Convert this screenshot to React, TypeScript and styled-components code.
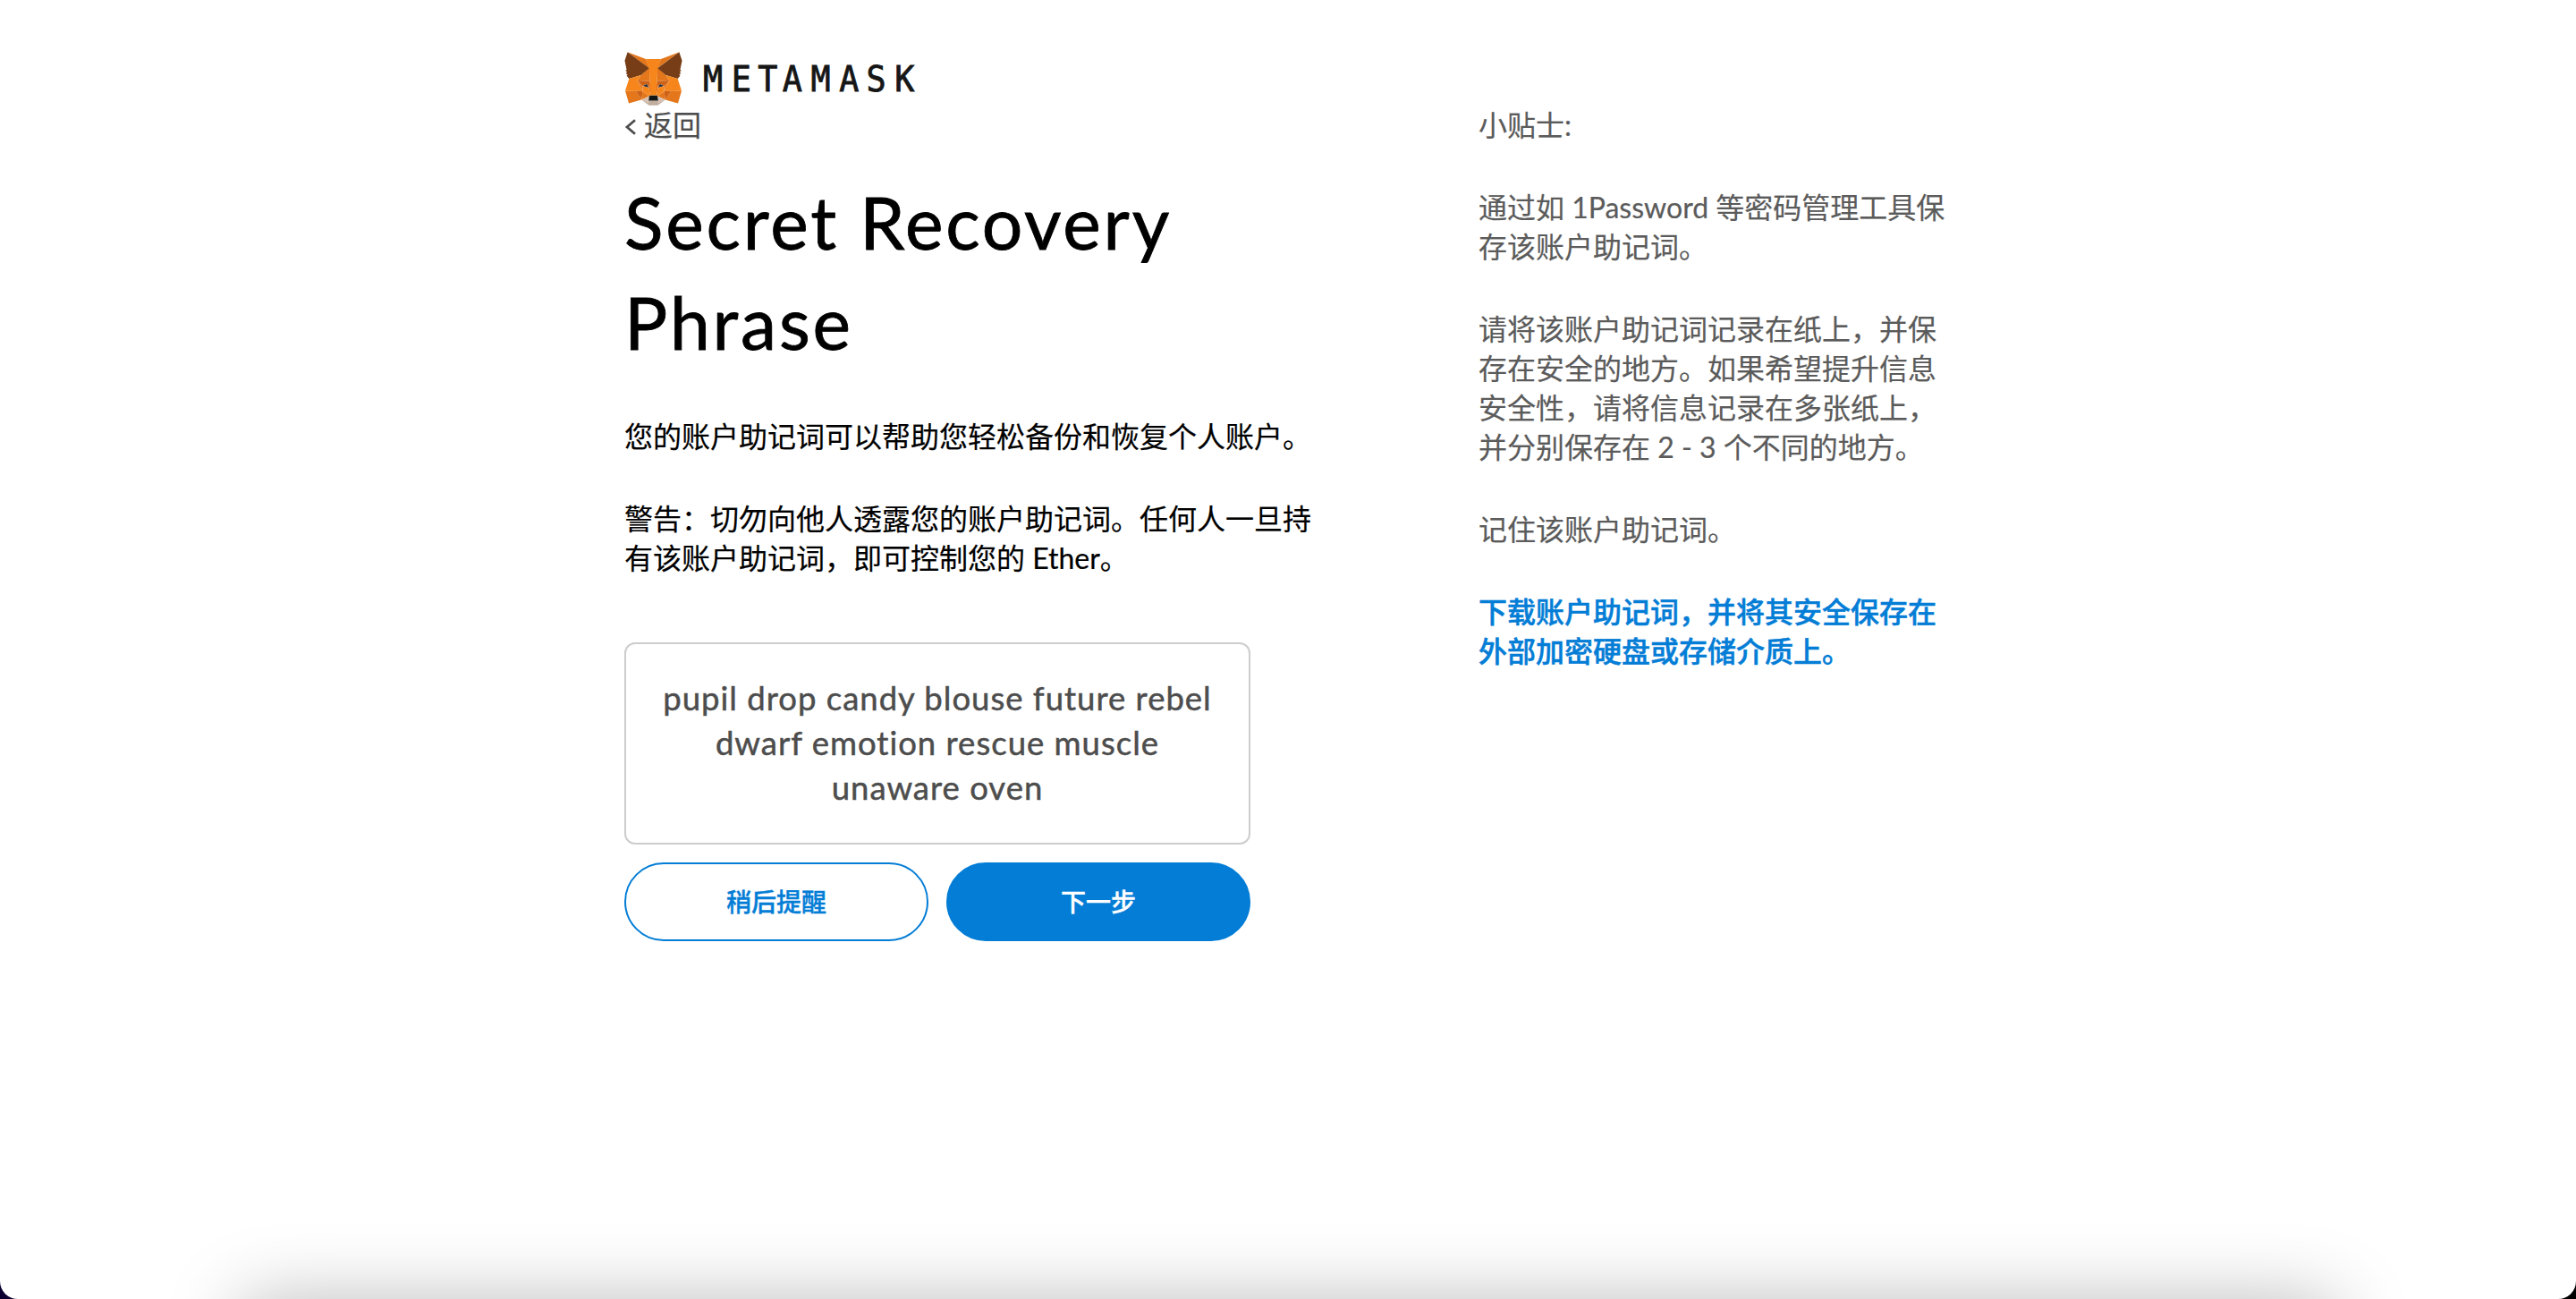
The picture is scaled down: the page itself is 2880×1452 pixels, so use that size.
import React from "react";
import styled, { createGlobalStyle } from "styled-components";

const GlobalStyle = createGlobalStyle`
  *, *::before, *::after { box-sizing: border-box; }
  body {
    margin: 0;
    background: linear-gradient(to right, #0b0030 50%, #000 50%);
    font-family: Lato, "Noto Sans CJK SC", sans-serif;
  }
`;

const Window = styled.div`
  position: relative;
  width: 2880px;
  height: 1452px;
  padding: 58px 0 0 698px;
  overflow: hidden;
  background: #fff;
  border-radius: 0 0 20px 20px;
`;

const DockShadow = styled.div`
  position: absolute;
  left: 270px;
  right: 270px;
  top: 1455px;
  height: 200px;
  box-shadow: 0 0 84px rgba(0, 0, 0, 0.28);
`;

const Header = styled.header`
  display: flex;
  align-items: flex-start;
  height: 60px;
`;

const FoxLogo = styled.svg`
  width: 65px;
  height: 60px;
`;

const Wordmark = styled.span`
  margin: 6px 0 0 23px;
  font: 39.5px/48px "DejaVu Sans Mono", monospace;
  letter-spacing: 10.4px;
  color: #161616;
  transform: scaleX(0.93);
  transform-origin: left center;
  -webkit-text-stroke: 0.9px #161616;
`;

const Kern = styled.span<{ $gap: number }>`
  letter-spacing: ${(p) => p.$gap}px;
`;

const Columns = styled.main`
  display: flex;
  align-items: flex-start;
`;

const Primary = styled.section`
  width: 780px;
  margin-right: 175px;
`;

const BackLink = styled.a`
  display: flex;
  align-items: center;
  gap: 8px;
  height: 44px;
  font-size: 32px;
  line-height: 44px;
  color: #4d4d4d;
  -webkit-text-stroke: 0.2px currentColor;
`;

const Chevron = styled.svg`
  width: 14px;
  height: 18px;
  margin-top: 3px;
`;

const Title = styled.h1`
  margin: 30px 0 50px;
  font-size: 80.5px;
  font-weight: 400;
  line-height: 112px;
  letter-spacing: 2.8px;
  color: #000;
  -webkit-text-stroke: 0.8px currentColor;
`;

const Paragraph = styled.p`
  margin: 0 0 48px;
  font-size: 32px;
  line-height: 44px;
  color: #000;
  -webkit-text-stroke: 0.2px currentColor;
`;

const PhraseBox = styled.div`
  width: 700px;
  height: 226px;
  margin-top: 72px;
  padding: 35px 0;
  border: 2px solid #cdcdcd;
  border-radius: 12px;
  font-size: 36.5px;
  line-height: 50px;
  letter-spacing: 1px;
  text-align: center;
  color: #4d4d4d;
  -webkit-text-stroke: 0.5px currentColor;
`;

const Actions = styled.div`
  display: flex;
  gap: 20px;
  width: 700px;
  margin-top: 20px;
`;

const Button = styled.button<{ $filled?: boolean }>`
  flex: 1;
  height: 88px;
  padding: 0;
  border: 2px solid #037dd6;
  border-radius: 44px;
  background: ${(p) => (p.$filled ? "#037dd6" : "#fff")};
  color: ${(p) => (p.$filled ? "#fff" : "#037dd6")};
  font-family: inherit;
  font-size: 28px;
  font-weight: 500;
  line-height: 40px;
  -webkit-text-stroke: 0.4px currentColor;
`;

const Tips = styled.aside`
  width: 540px;
`;

const Tip = styled(Paragraph)`
  color: #5b5b5b;
`;

const DownloadLink = styled.a`
  display: block;
  font-size: 32px;
  font-weight: 500;
  line-height: 44px;
  color: #037dd6;
  -webkit-text-stroke: 0.5px currentColor;
`;

const foxFacets: Array<[string, string[]]> = [
  ["#e2761b", ["274.1 35.5 174.6 109.4 193 65.8"]],
  ["#e4761b", [
    "44.4 35.5 143.1 110.1 125.6 65.8",
    "238.3 206.8 211.8 247.4 268.5 263 284.8 207.7",
    "33.9 207.7 50.1 263 106.8 247.4 80.3 206.8",
    "103.6 138.2 87.8 162.1 144.1 164.6 142.1 104.1",
    "214.9 138.2 175.9 103.4 174.6 164.6 230.8 162.1",
    "106.8 247.4 140.6 230.9 111.4 208.1",
    "177.9 230.9 211.8 247.4 207.1 208.1",
  ]],
  ["#d7c1b3", [
    "211.8 247.4 177.9 230.9 180.6 253 180.3 262.3",
    "106.8 247.4 138.3 262.3 138.1 253 140.6 230.9",
  ]],
  ["#233447", ["138.8 193.5 110.6 185.2 130.5 176.1", "179.7 193.5 188 176.1 208 185.2"]],
  ["#cd6116", [
    "106.8 247.4 111.6 206.8 80.3 207.7",
    "207 206.8 211.8 247.4 238.3 207.7",
    "230.8 162.1 174.6 164.6 179.8 193.5 188.1 176.1 208.1 185.2",
    "110.6 185.2 130.6 176.1 138.8 193.5 144.1 164.6 87.8 162.1",
  ]],
  ["#e4751f", [
    "87.8 162.1 111.4 208.1 110.6 185.2",
    "208.1 185.2 207.1 208.1 230.8 162.1",
    "144.1 164.6 138.8 193.5 145.4 227.6 146.9 182.7",
    "174.6 164.6 171.9 182.6 173.1 227.6 179.8 193.5",
  ]],
  ["#f6851b", [
    "179.8 193.5 173.1 227.6 177.9 230.9 207.1 208.1 208.1 185.2",
    "110.6 185.2 111.4 208.1 140.6 230.9 145.4 227.6 138.8 193.5",
  ]],
  ["#c0ad9e", ["180.3 262.3 180.6 253 178.1 250.8 140.4 250.8 138.1 253 138.3 262.3 106.8 247.4 117.8 256.4 140.1 271.9 178.4 271.9 200.8 256.4 211.8 247.4"]],
  ["#161616", ["177.9 230.9 173.1 227.6 145.4 227.6 140.6 230.9 138.1 253 140.4 250.8 178.1 250.8 180.6 253"]],
  ["#763d16", [
    "278.3 114.2 286.8 73.4 274.1 35.5 177.9 106.9 214.9 138.2 267.2 153.5 278.8 140 273.8 136.4 281.8 129.1 275.6 124.3 283.6 118.2",
    "31.8 73.4 40.3 114.2 34.9 118.2 42.9 124.3 36.8 129.1 44.8 136.4 39.8 140 51.3 153.5 103.6 138.2 140.6 106.9 44.4 35.5",
  ]],
  ["#f6851b", [
    "267.2 153.5 214.9 138.2 230.8 162.1 207.1 208.1 238.3 207.7 284.8 207.7",
    "103.6 138.2 51.3 153.5 33.9 207.7 80.3 207.7 111.4 208.1 87.8 162.1",
    "174.6 164.6 177.9 106.9 193.1 65.8 125.6 65.8 140.6 106.9 144.1 164.6 145.3 182.8 145.4 227.6 173.1 227.6 173.3 182.8",
  ]],
];

export default function App() {
  return (
    <>
      <GlobalStyle />
      <Window>
        <Header>
          <FoxLogo viewBox="30 34.5 258.6 238.4" aria-hidden="true">
            {foxFacets.map(([fill, shapes]) =>
              shapes.map((points) => <polygon key={points} points={points} fill={fill} />)
            )}
          </FoxLogo>
          <Wordmark>
            M<Kern $gap={7.9}>E</Kern><Kern $gap={5.8}>T</Kern>AM<Kern $gap={8.5}>A</Kern>SK
          </Wordmark>
        </Header>
        <Columns>
          <Primary>
            <BackLink>
              <Chevron viewBox="0 0 14 18" fill="none" stroke="#4d4d4d" strokeWidth="2.8">
                <path d="M12 1.2 3 9l9 7.8" />
              </Chevron>
              返回
            </BackLink>
            <Title>
              Secret Recovery
              <br />
              Phrase
            </Title>
            <Paragraph>您的账户助记词可以帮助您轻松备份和恢复个人账户。</Paragraph>
            <Paragraph>
              警告：切勿向他人透露您的账户助记词。任何人一旦持
              <br />
              有该账户助记词，即可控制您的 Ether。
            </Paragraph>
            <PhraseBox>
              pupil drop candy blouse future rebel
              <br />
              dwarf emotion rescue muscle
              <br />
              unaware oven
            </PhraseBox>
            <Actions>
              <Button>稍后提醒</Button>
              <Button $filled>下一步</Button>
            </Actions>
          </Primary>
          <Tips>
            <Tip>小贴士:</Tip>
            <Tip>
              通过如 1Password 等密码管理工具保
              <br />
              存该账户助记词。
            </Tip>
            <Tip>
              请将该账户助记词记录在纸上，并保
              <br />
              存在安全的地方。如果希望提升信息
              <br />
              安全性，请将信息记录在多张纸上，
              <br />
              并分别保存在 2 - 3 个不同的地方。
            </Tip>
            <Tip>记住该账户助记词。</Tip>
            <DownloadLink>
              下载账户助记词，并将其安全保存在
              <br />
              外部加密硬盘或存储介质上。
            </DownloadLink>
          </Tips>
        </Columns>
        <DockShadow />
      </Window>
    </>
  );
}
